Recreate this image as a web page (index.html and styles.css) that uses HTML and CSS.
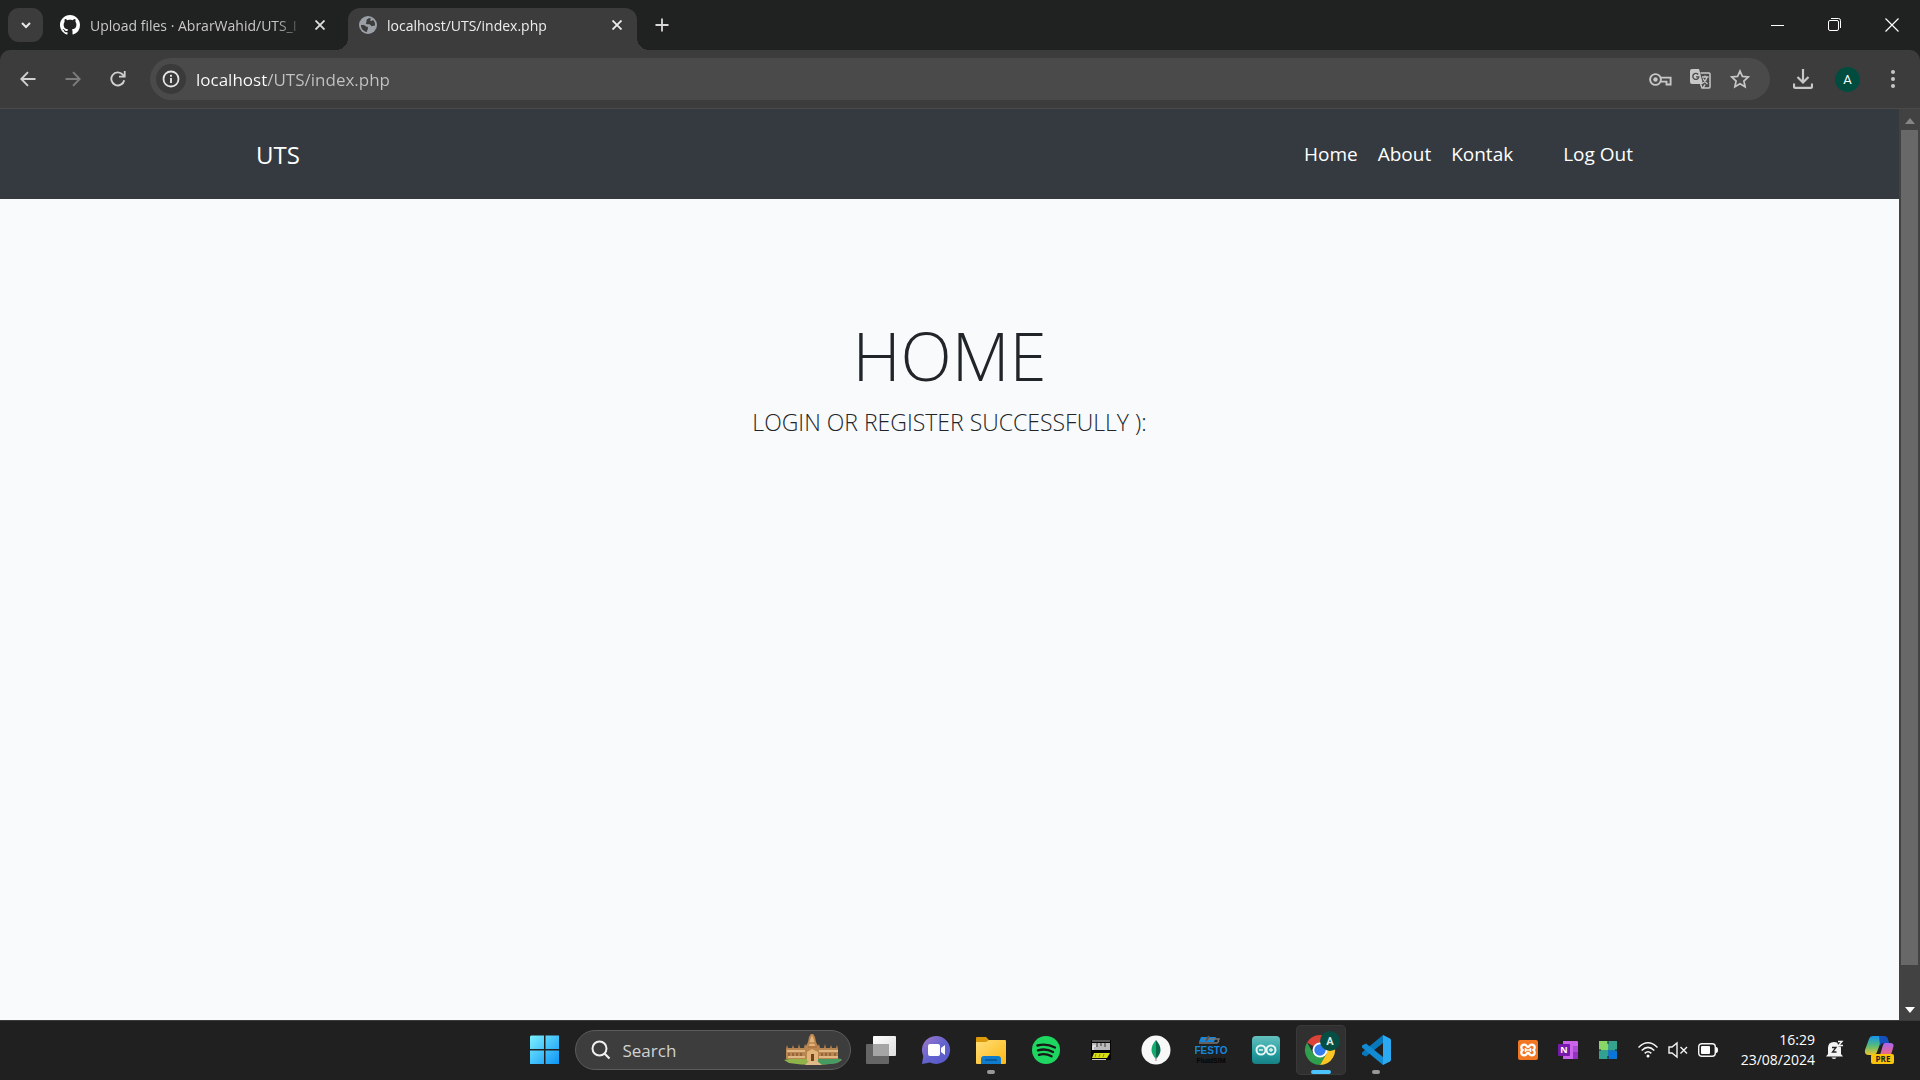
FILE: index.html
```html
<!DOCTYPE html>
<html lang="en">
<head>
<meta charset="utf-8">
<meta name="viewport" content="width=device-width, initial-scale=1">
<title>localhost/UTS/index.php</title>
<link rel="stylesheet" href="styles.css">
</head>
<body>
<header class="browser">
  <div class="tabstrip">
    <button class="tab-search" aria-label="Search tabs"><svg width="12" height="12" viewBox="0 0 12 12"><path d="M2 4l4 4 4-4" fill="none" stroke="#e8e8e8" stroke-width="2"/></svg></button>
    <div class="tab">
      <svg width="20" height="20" viewBox="0 0 16 16" fill="#fff"><path d="M8 0C3.58 0 0 3.58 0 8c0 3.54 2.29 6.53 5.47 7.59.4.07.55-.17.55-.38 0-.19-.01-.82-.01-1.49-2.01.37-2.53-.49-2.69-.94-.09-.23-.48-.94-.82-1.13-.28-.15-.68-.52-.01-.53.63-.01 1.08.58 1.23.82.72 1.21 1.87.87 2.33.66.07-.52.28-.87.51-1.07-1.78-.2-3.64-.89-3.64-3.95 0-.87.31-1.59.82-2.15-.08-.2-.36-1.02.08-2.12 0 0 .67-.21 2.2.82.64-.18 1.32-.27 2-.27s1.36.09 2 .27c1.53-1.04 2.2-.82 2.2-.82.44 1.1.16 1.92.08 2.12.51.56.82 1.27.82 2.15 0 3.07-1.87 3.75-3.65 3.95.29.25.54.73.54 1.48 0 1.07-.01 1.93-.01 2.2 0 .21.15.46.55.38A8.01 8.01 0 0 0 16 8c0-4.42-3.58-8-8-8z"/></svg>
      <span class="tab-title">Upload files · AbrarWahid/UTS_I</span>
      <button class="close" aria-label="Close tab"><svg width="10" height="10" viewBox="0 0 10 10"><path d="M0.500 0.500l9 9M9.500 0.500l-9 9" stroke="#dedede" stroke-width="1.800"/></svg></button>
    </div>
    <div class="tab active">
      <svg width="18" height="18" viewBox="0 0 18 18"><circle cx="9" cy="9" r="9" fill="#9aa0a6"/><path d="M2 9c2 0 3.500-.3 4.500 1s2.500 0 2.500 2-1 1.500-1 4C4 15.500 1.800 12 2 9zM10 2c-1 1-3 1.500-2.500 3s-1.500 2 0 3 2.500-.5 3.500.5 1 2 2.500 1.500 1.500 0 2.500-.5c.3-2.500-.7-4.500-2-5.500L12.500 5 11 4.500 12 2.600z" fill="#3c3c3c"/></svg>
      <span class="tab-title">localhost/UTS/index.php</span>
      <button class="close" aria-label="Close tab"><svg width="10" height="10" viewBox="0 0 10 10"><path d="M0.500 0.500l9 9M9.500 0.500l-9 9" stroke="#eee" stroke-width="1.800"/></svg></button>
    </div>
    <button class="new-tab" aria-label="New tab"><svg width="14" height="14" viewBox="0 0 14 14"><path d="M7 0.500v13M0.500 7h13" stroke="#d8d8d8" stroke-width="1.800"/></svg></button>
    <div class="window-buttons">
      <button aria-label="Minimize"><svg width="14" height="14" viewBox="0 0 14 14"><path d="M0 7.500h13" stroke="#fff"/></svg></button>
      <button aria-label="Restore"><svg width="14" height="14" viewBox="0 0 14 14" fill="none" stroke="#fff"><rect x=".5" y="2.500" width="10" height="10" rx="1.500"/><path d="M3 .5h7.500a2 2 0 0 1 2 2V10"/></svg></button>
      <button aria-label="Close"><svg width="14" height="14" viewBox="0 0 14 14"><path d="M.5.5l13 13M13.500.5l-13 13" stroke="#fff" stroke-width="1.200"/></svg></button>
    </div>
  </div>
  <div class="toolbar">
    <div class="history">
      <button aria-label="Back"><svg width="16" height="16" viewBox="0 0 16 16" fill="none" stroke="#d0d0d0" stroke-width="1.900"><path d="M15.500 8H1.500M8 1.200L1.300 8 8 14.800"/></svg></button>
      <button aria-label="Forward"><svg width="16" height="16" viewBox="0 0 16 16" fill="none" stroke="#7d7d7d" stroke-width="1.900"><path d="M.5 8h14M8 1.200L14.700 8 8 14.800"/></svg></button>
      <button aria-label="Reload"><svg width="16" height="16" viewBox="0 0 16 16"><path d="M14.200 9.200A6.500 6.500 0 1 1 12.800 3.700L14.500 5.500" fill="none" stroke="#d0d0d0" stroke-width="1.900"/><path d="M15.600 0v6.600H9V4.800h4.800V0z" fill="#d0d0d0"/></svg></button>
    </div>
    <div class="omnibox">
      <button class="site-info" aria-label="Site information"><svg width="18" height="18" viewBox="0 0 18 18"><circle cx="9" cy="9" r="7.500" fill="none" stroke="#e3e3e3" stroke-width="1.800"/><path d="M9 8v5M9 4.800v2" stroke="#e3e3e3" stroke-width="1.900"/></svg></button>
      <input class="address" type="text" aria-label="Address" value="localhost/UTS/index.php" spellcheck="false">
      <button aria-label="Passwords"><svg width="24" height="24" viewBox="0 0 24 24" fill="none" stroke="#c7c7c7" stroke-width="1.900"><circle cx="7.500" cy="12.500" r="5.400"/><path d="M12.600 10.600H22.600V17.500H18.500V14.600H12.600"/><circle cx="7.500" cy="12.500" r="2.200" fill="#c7c7c7" stroke="none"/></svg></button>
      <button aria-label="Translate"><svg width="22" height="22" viewBox="0 0 22 22"><path d="M3 1h7l4 15H3a2 2 0 0 1-2-2V3a2 2 0 0 1 2-2z" fill="#c7c7c7"/><path d="M9.200 6.500a3 3 0 1 0 .6 2.400H7" fill="none" stroke="#4a4a4a" stroke-width="1.400"/><path d="M11.500 5H20a1 1 0 0 1 1 1v13a1 1 0 0 1-1 1h-7l-1.400-4M14 20l2-3.500" fill="none" stroke="#c7c7c7" stroke-width="1.500"/><path d="M13 9h6.500M16 7.500V9M18 9c-.5 2.500-2 4.500-4 6M14 10.500c1 2 2.500 4 4.500 5.500" fill="none" stroke="#c7c7c7" stroke-width="1.300"/></svg></button>
      <button aria-label="Bookmark"><svg width="20" height="20" viewBox="0 0 20 20"><path d="M10 2l2.400 5.400 5.900.6-4.400 4 1.200 5.700L10 14.700l-5.100 3 1.200-5.700-4.400-4 5.900-.6z" fill="none" stroke="#c7c7c7" stroke-width="1.700"/></svg></button>
    </div>
    <div class="actions">
      <button aria-label="Downloads"><svg width="20" height="20" viewBox="0 0 20 20" fill="none" stroke="#c7c7c7" stroke-width="2.200"><path d="M10 0v13M4.500 8l5.500 5.500L15.500 8M1 14.500v3.300q0 1 1 1h16q1 0 1-1v-3.300"/></svg></button>
      <button aria-label="Profile"><span class="avatar">A</span></button>
      <button aria-label="Menu"><svg width="6" height="20" viewBox="0 0 6 20" fill="#c7c7c7"><circle cx="3" cy="3" r="2"/><circle cx="3" cy="10" r="2"/><circle cx="3" cy="17" r="2"/></svg></button>
    </div>
  </div>
</header>

<div class="viewport">
  <div class="page">
    <nav class="navbar">
      <div class="container">
        <a class="brand" href="#">UTS</a>
        <ul class="links">
          <li><a href="#">Home</a></li>
          <li><a href="#">About</a></li>
          <li><a href="#">Kontak</a></li>
          <li class="logout"><a href="#">Log Out</a></li>
        </ul>
      </div>
    </nav>
    <main class="hero">
      <h1>HOME</h1>
      <p>LOGIN OR REGISTER SUCCESSFULLY ):</p>
    </main>
  </div>
  <div class="scrollbar">
    <svg width="10" height="6" viewBox="0 0 10 6"><path d="M0 6l5-6 5 6z" fill="#858585"/></svg>
    <div class="track"><div class="thumb"></div></div>
    <svg width="10" height="6" viewBox="0 0 10 6"><path d="M0 0l5 6 5-6z" fill="#fff"/></svg>
  </div>
</div>

<footer class="taskbar">
  <div class="apps">
    <button class="app" aria-label="Start"><svg width="30" height="30" viewBox="0 0 30 30"><defs><linearGradient id="win" gradientUnits="userSpaceOnUse" x1="0" y1="0" x2="1" y2="1" gradientTransform="scale(30)"><stop stop-color="#7df1ff"/><stop offset="1" stop-color="#0a92f5"/></linearGradient></defs><path d="M1 .5h13V14H0V1.500zM15.500.5H29V14H15.500zM0 15.500h14V29H0zM15.500 15.500H29V29H15.500z" fill="url(#win)"/></svg></button>
    <label class="search">
      <svg width="20" height="20" viewBox="0 0 20 20" fill="none" stroke="#f0f0f0"><circle cx="8.500" cy="8.500" r="7" stroke-width="2"/><path d="M13.500 13.500l5 5" stroke-width="2.200"/></svg>
      <input type="text" placeholder="Search" aria-label="Search">
      <svg width="60" height="32" viewBox="0 0 60 32"><path d="M1 26q28-7 58 0l-5 3q-24 4-48 0z" fill="#8fb34a"/><path d="M34 25q15-2 25 0l-5 4q-10 2-18 1z" fill="#469b63"/><path d="M3 25V15l1-4 1 3h4l1-3 1 3h4l1-4 1 4h4l1-4 1 2 2-4 1-5 3-5 3 5 1 5 2 4 1-2 1 4h4l1-4 1 4h4l1-3 1 3h4l1-3 1 4v10z" fill="#b98650"/><path d="M26 12l1-6 2-5 2 5 1 6zM24 27V18l5-3 6 3v9z" fill="#e3b478"/><path d="M4 17h18M36 17h19M5 23h17M36 23h19" stroke="#edc793" stroke-width="1.500"/><path d="M6 19v3M10 19v3M14 19v3M18 19v3M39 19v3M43 19v3M47 19v3M52 19v3" stroke="#8a5c38" stroke-width="1.500"/><path d="M28 20h3v7h-3z" fill="#704426"/><path d="M26 9h6M25 13h9" stroke="#a66d3a"/><path d="M26 27h8l5 4H22z" fill="#e0b988"/></svg>
    </label>
    <button class="app" aria-label="Task view"><svg width="32" height="30" viewBox="0 0 32 30"><defs><linearGradient id="tv" x2="1" y2="1"><stop stop-color="#fff"/><stop offset="1" stop-color="#ddd"/></linearGradient></defs><rect x="1" y="9" width="23" height="20" rx="1" fill="#656565"/><rect x="8" y="1" width="23" height="20" rx="1" fill="url(#tv)"/><path d="M8 9h16v12H8z" fill="#a5a5a5"/></svg></button>
    <button class="app" aria-label="Chat"><svg width="30" height="30" viewBox="0 0 30 30"><defs><linearGradient id="ch" x2="1" y2="1"><stop stop-color="#a477c8"/><stop offset=".5" stop-color="#6464cf"/><stop offset="1" stop-color="#5558c8"/></linearGradient></defs><path d="M15 1a14 14 0 1 1-6 26.600L1 29l1.300-8A14 14 0 0 1 15 1z" fill="url(#ch)"/><rect x="7" y="9" width="12" height="12" rx="2" fill="#fff"/><path d="M20 13l4-3v10l-4-3z" fill="#fff"/></svg></button>
    <button class="app running" aria-label="File Explorer"><svg width="32" height="30" viewBox="0 0 32 30"><defs><linearGradient id="fo" x2="1" y2="1"><stop stop-color="#ffde79"/><stop offset="1" stop-color="#fdb813"/></linearGradient></defs><path d="M1 3q0-1 1-1h9l3 3h16v6H1z" fill="#dc9a0b"/><path d="M1 7h10l3-2h16q1 0 1 1v22q0 1-1 1H2q-1 0-1-1z" fill="url(#fo)"/><path d="M6 29v-5q0-3 3-3h14q3 0 3 3v5z" fill="#0f7ccb"/><path d="M10 25h12" stroke="#075391" stroke-width="1.500"/></svg></button>
    <button class="app" aria-label="Spotify"><svg width="28" height="28" viewBox="0 0 28 28"><circle cx="14" cy="14" r="14" fill="#1ed760"/><path d="M5.500 9.500q9-2.500 17.500 2M6 14.300q8-2.300 15 1.700M7 18.800q6.500-1.800 12.500 1.500" fill="none" stroke="#181818" stroke-width="2.400" stroke-linecap="round"/></svg></button>
    <button class="app" aria-label="Pneumatic simulator"><svg width="20" height="20" viewBox="0 0 20 20"><rect width="20" height="20" fill="#050505"/><path d="M1 1h18" stroke="#aaa"/><path d="M1 3h18v7H1z" fill="#bbb"/><path d="M6 3v4M10 3v3M14 3v4" stroke="#333"/><path d="M2 10V6h3" fill="none" stroke="#fff"/><path d="M3 13h16l-3 5H1z" fill="#d9dd16"/><path d="M5 14l-1 3M9 14l-1 3M13 14l-1 3" stroke="#8a8c10"/><path d="M1 19.500h14" stroke="#ccc"/></svg></button>
    <button class="app" aria-label="MongoDB Compass"><svg width="30" height="30" viewBox="0 0 30 30"><circle cx="15" cy="15" r="14.500" fill="#f7f8f7"/><path d="M15 5q-9 10 0 19z" fill="#13aa6b"/><path d="M15 5q9 10 0 19z" fill="#08694a"/><path d="M15 22v4" stroke="#888"/></svg></button>
    <button class="app" aria-label="Festo FluidSIM"><svg width="32" height="30" viewBox="0 0 32 30"><path d="M6 2h15l-2 5H4z" fill="#1686dc"/><path d="M8 4h16l-1 2M4 8h18l2-2" fill="none" stroke="#777" stroke-width="1.500"/><path d="M14 1l-3 5" stroke="#555" stroke-width="2"/><text x="16" y="19" text-anchor="middle" class="festo">FESTO</text><text x="16" y="28" text-anchor="middle" class="fluid">FluidSIM</text></svg></button>
    <button class="app" aria-label="Arduino IDE"><svg width="28" height="28" viewBox="0 0 28 28"><defs><linearGradient id="ar" x2="0" y2="1"><stop stop-color="#65c0bd"/><stop offset=".6" stop-color="#249fa2"/><stop offset="1" stop-color="#178084"/></linearGradient></defs><rect width="28" height="28" rx="4" fill="url(#ar)"/><g fill="none" stroke="#e7f5f4" stroke-width="2"><circle cx="9" cy="14" r="4.500"/><circle cx="19" cy="14" r="4.500"/></g><path d="M7 14h4M17 14h4M19 12v4" stroke="#e7f5f4" stroke-width="1.300"/></svg></button>
    <button class="app current" aria-label="Google Chrome"><svg width="38" height="38" viewBox="0 0 38 38"><g transform="translate(18 19)"><path d="M0 0L-13 -7.500A15 15 0 0 1 13 -7.500z" fill="#df4337"/><path d="M-13 -7.500A15 15 0 0 0 0 15L6.500 3.700 0 0-6.500 3.700z" fill="#2f9e4d"/><path d="M13-7.500H0L6.500 3.700 0 15A15 15 0 0 0 13-7.500z" fill="#fcc624"/><circle r="7.500" fill="#fff"/><circle r="5.700" fill="#347df0"/></g><circle cx="28" cy="10" r="10" fill="#064e43"/><text x="28" y="14" text-anchor="middle" class="badge">A</text></svg></button>
    <button class="app running" aria-label="Visual Studio Code"><svg width="30" height="30" viewBox="0 0 30 30"><path d="M22 8L5 21.500 1 19.500v-2L22 0z" fill="#0878bd"/><path d="M22 22L5 8.500 1 10.500v2L22 30z" fill="#138ad4"/><path d="M22 0l7 3.500q1 .5 1 2v19q0 1.500-1 2L22 30z" fill="#2baaf2"/></svg></button>
  </div>
  <div class="tray">
    <button aria-label="XAMPP"><svg width="20" height="20" viewBox="0 0 20 20"><rect width="20" height="20" rx="2" fill="#f37623"/><path d="M6.500 4.700c2.500 0 2 2.300 3.500 2.300s1-2.300 3.500-2.300 3.200 1.300 3.200 2.800S15.500 10 15.500 10s1.200.8 1.200 2.500-1 2.800-3.200 2.800S11.500 13 10 13s-1 2.300-3.500 2.300-3.200-1.300-3.200-2.800S4.500 10 4.500 10 3.300 9.200 3.300 7.500s1-2.800 3.200-2.800z" fill="none" stroke="#fff" stroke-width="2.300"/><path d="M7.500 8v4M12.500 8v4M7 10h6" stroke="#fff" stroke-width="1.600"/></svg></button>
    <button aria-label="OneNote"><svg width="20" height="20" viewBox="0 0 20 20"><path d="M5 1h14q1 0 1 1v16q0 1-1 1H5z" fill="#ca64ea"/><path d="M15 6h5v6h-5z" fill="#ae4bd5"/><path d="M15 12h5v7h-5z" fill="#9332bf"/><rect y="4" width="12" height="12" rx="1" fill="#7719aa"/><text x="6" y="13" text-anchor="middle" class="note">N</text></svg></button>
    <button aria-label="Widgets"><svg width="20" height="20" viewBox="0 0 20 20"><path d="M1 1h9v9H1z" fill="#87d667"/><path d="M10 1h9v9h-9z" fill="#35a28e"/><path d="M1 10h9v9H1z" fill="#31a292"/><path d="M10 10h9v9h-9z" fill="#1d75b2"/><circle cx="15" cy="15" r="4" fill="#0974dc"/><path d="M10 1v3M10 16v3M1 10h2M17 10h2" stroke="#202020"/></svg></button>
    <button class="status" aria-label="Network, volume and battery">
      <svg width="20" height="18" viewBox="0 0 20 18" fill="none" stroke="#f4f4f4" stroke-width="1.500"><path d="M.5 6.500q9.500-9.500 19 0M3.700 9.500q6.300-6.300 12.600 0M6.700 12.400q3.300-3.300 6.600 0"/><circle cx="10" cy="15" r="1.500" fill="#fff" stroke="none"/></svg>
      <svg width="20" height="18" viewBox="0 0 20 18" fill="none" stroke="#f4f4f4" stroke-width="1.400"><path d="M1 6h3l5-4v14l-5-4H1zM12.500 6l6.500 6.500M19 6l-6.500 6.500"/></svg>
      <svg width="20" height="14" viewBox="0 0 20 14"><rect x=".7" y=".7" width="16.600" height="12.600" rx="3" fill="none" stroke="#f4f4f4" stroke-width="1.400"/><rect x="3" y="3" width="9" height="8" rx="1" fill="#fff"/><path d="M18 4q2 0 2 3t-2 3z" fill="#fff"/></svg>
    </button>
    <button class="clock"><span>16:29</span><span>23/08/2024</span></button>
    <button aria-label="Notifications"><svg width="20" height="20" viewBox="0 0 20 20"><path d="M3 14V8q0-6 6-6 7 0 7 6v6l2 2.500H1z" fill="#f3f3f3"/><path d="M6.500 17.500h5q-2.500 3-5 0z" fill="#f3f3f3"/><path d="M7 7.500h4L7.500 12h4" fill="none" stroke="#202020" stroke-width="1.300"/><path d="M11.500 0H20v6.500h-6.500z" fill="#202020"/><path d="M13 1.500h4L13.500 5.500H18" fill="none" stroke="#f3f3f3" stroke-width="1.400"/></svg></button>
    <button class="copilot" aria-label="Copilot"><svg width="32" height="30" viewBox="0 0 32 30"><defs><linearGradient id="ca" x2="0" y2="1"><stop stop-color="#1494ef"/><stop offset=".5" stop-color="#55ba7a"/><stop offset="1" stop-color="#efc52b"/></linearGradient><linearGradient id="cb" x2="0" y2="1"><stop stop-color="#a965f1"/><stop offset="1" stop-color="#f2697d"/></linearGradient></defs><path d="M9 1h10l-6 16q-1 3-4 3H5q-5 0-4-5L5 4q1-3 4-3z" fill="url(#ca)"/><path d="M15 1h5q3 0 4 3l1 4h-5q-3 0-4 3z" fill="#1550bd"/><path d="M21 8h5q5 0 3 5l-2 7H16l3-10q.5-2 2-2z" fill="url(#cb)"/><rect x="7" y="19" width="23" height="10" rx="2" fill="#fbc40b"/><text x="19" y="27" text-anchor="middle" class="pre">PRE</text></svg></button>
  </div>
</footer>
</body>
</html>
```

FILE: styles.css
```css
* { box-sizing: border-box; }
body {
  margin: 0;
  min-height: 100vh;
  display: flex;
  flex-direction: column;
  font-family: "Open Sans", "Noto Sans", sans-serif;
  background: #f8fafc;
}
button {
  display: flex;
  align-items: center;
  justify-content: center;
  padding: 0;
  border: 0;
  background: none;
  color: inherit;
  font: inherit;
}
input { font: inherit; border: 0; outline: 0; padding: 0; background: none; min-width: 0; }
svg { display: block; flex: none; }

/* Browser chrome */
.browser { background: #202221; color: #e3e3e3; }
.tabstrip { display: flex; height: 50px; padding-left: 8px; align-items: center; }
.tab-search { width: 35px; height: 34px; border-radius: 11px; background: #3c3c3c; }
.tab {
  display: flex;
  align-items: center;
  align-self: flex-end;
  gap: 10px;
  width: 299px;
  height: 42px;
  padding: 0 23px 8px 11px;
  margin-left: 6px;
  font-size: 14px;
  color: #c8c8c8;
}
.tab-title {
  flex: 1;
  overflow: hidden;
  white-space: nowrap;
  mask-image: linear-gradient(to right, #000 calc(100% - 30px), transparent);
}
.tab.active {
  position: relative;
  width: 289px;
  margin-left: 0;
  padding-right: 15px;
  background: #3c3c3c;
  color: #ededed;
  border-radius: 12px 12px 0 0;
}
.tab.active::before, .tab.active::after {
  content: "";
  position: absolute;
  bottom: 0;
  width: 12px;
  height: 12px;
}
.tab.active::before { right: 100%; background: radial-gradient(circle at 0 0, transparent 12px, #3c3c3c 12px); }
.tab.active::after { left: 100%; background: radial-gradient(circle at 100% 0, transparent 12px, #3c3c3c 12px); }
.new-tab { width: 50px; height: 34px; }
.window-buttons { display: flex; margin-left: auto; }
.window-buttons button { width: 57px; height: 50px; }

.toolbar {
  display: flex;
  align-items: center;
  height: 59px;
  background: #3c3c3c;
  border-radius: 10px 10px 0 0;
  border-bottom: 1px solid #4a4a4a;
}
.history { display: flex; padding: 0 10px 0 5px; }
.history button { width: 45px; height: 40px; }
.omnibox {
  flex: 1;
  display: flex;
  align-items: center;
  gap: 10px;
  height: 42px;
  padding: 0 15px 0 6px;
  border-radius: 21px;
  background: #4a4a4a;
}
.omnibox button { width: 30px; height: 30px; }
.omnibox .site-info { border-radius: 50%; background: #3a3a3a; }
.address {
  flex: 1;
  font-size: 17px;
  color: transparent;
  background: linear-gradient(to right, #fff 71px, #c3c3c3 71px);
  background-clip: text;
}
.actions { display: flex; padding: 0 5px 0 10px; }
.actions button { width: 45px; height: 40px; }
.avatar {
  width: 25px;
  height: 25px;
  border-radius: 50%;
  background: #004d40;
  color: #fff;
  font: 13px/25px Roboto, sans-serif;
  text-align: center;
}

/* Page */
.viewport { flex: 1; display: flex; }
.page { flex: 1; color: #212529; }
.navbar { display: flex; justify-content: center; background: #343a40; }
.container {
  flex: 1;
  display: flex;
  align-items: center;
  justify-content: space-between;
  max-width: 1425px;
  min-height: 90px;
  padding: 0 29px 0 19px;
}
a { color: #fff; text-decoration: none; }
.brand { font-size: 24px; }
.links { display: flex; gap: 20px; margin: 0; padding: 0; list-style: none; font-size: 19px; line-height: 28px; }
.logout { margin-left: 30px; }
.hero { padding: 111px 20px; text-align: center; font-weight: 300; }
h1 { margin: 0; font-size: 67px; line-height: 90px; font-weight: 300; }
p { margin: 0; font-size: 23px; line-height: 44px; }

.scrollbar {
  display: flex;
  flex-direction: column;
  align-items: center;
  width: 21px;
  padding: 9px 2px 7px;
  background: #424242;
}
.track { flex: 1; align-self: stretch; padding: 6px 0 42px; }
.thumb { height: 100%; background: #686868; }

/* Taskbar */
.taskbar {
  display: grid;
  grid-template-columns: 1fr auto 1fr;
  align-items: center;
  height: 60px;
  background: #202020;
  box-shadow: inset 0 1px #3a3a3a;
  color: #fff;
}
.apps { grid-column: 2; display: flex; align-items: center; gap: 5px; }
.app { position: relative; width: 50px; height: 50px; border-radius: 5px; }
.app.current { background: #303031; box-shadow: inset 0 0 0 1px #393939; }
.app.running::after, .app.current::after {
  content: "";
  position: absolute;
  bottom: 1px;
  width: 8px;
  height: 4px;
  border-radius: 2px;
  background: #989898;
}
.app.current::after { width: 20px; background: #4cc2ff; }
.search {
  display: flex;
  align-items: center;
  gap: 12px;
  width: 276px;
  height: 40px;
  padding: 0 7px 0 15px;
  border: 1px solid #5c5c5c;
  border-radius: 20px;
  background: #3d3d3d;
}
.search input { flex: 1; font-size: 17px; color: #fff; }
.search input::placeholder { color: #d2d2d2; opacity: 1; }
.festo { font: bold 10px "Liberation Sans", sans-serif; fill: #1686dc; }
.fluid { font: bold 7px "Liberation Sans", sans-serif; fill: #050505; }
.badge { font: bold 11px Roboto, sans-serif; fill: #dce8e5; }
.note { font: bold 9px "Open Sans", sans-serif; fill: #fff; }
.pre { font: bold 8px "Open Sans", sans-serif; fill: #222; }
.tray { display: flex; align-items: center; justify-content: flex-end; padding-right: 15px; }
.tray button { width: 40px; height: 50px; }
.tray .status { width: 100px; gap: 10px; }
.tray .clock {
  flex-direction: column;
  align-items: flex-end;
  width: 87px;
  font-size: 14px;
  line-height: 20px;
}
.tray .copilot { width: 50px; }
```
